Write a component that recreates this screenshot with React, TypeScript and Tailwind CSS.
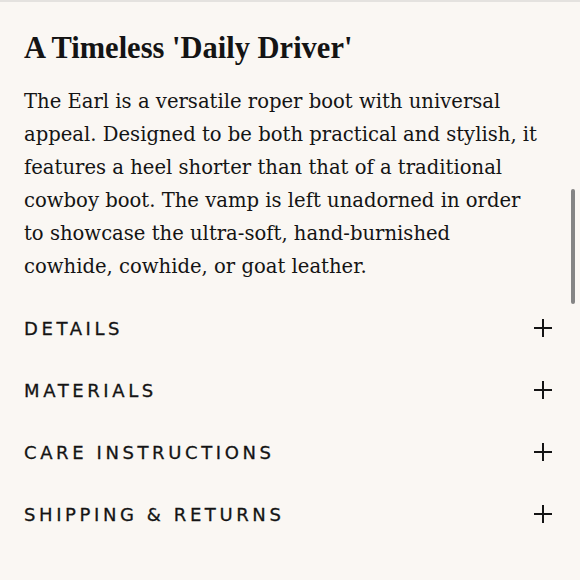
const sections = ["Details", "Materials", "Care Instructions", "Shipping & Returns"];

const lines = [
  "The Earl is a versatile roper boot with universal",
  "appeal. Designed to be both practical and stylish, it",
  "features a heel shorter than that of a traditional",
  "cowboy boot. The vamp is left unadorned in order",
  "to showcase the ultra-soft, hand-burnished",
  "cowhide, cowhide, or goat leather.",
];

export default function App() {
  return (
    <div className="relative w-[580px] h-[580px] overflow-hidden bg-[#faf7f3] border-t-2 border-[#e4e2df] text-[#141414]">
      <div className="pl-6 pr-6 pt-[28px]">
        <h2 className="font-['Liberation_Serif',serif] text-[30.5px] leading-9 font-bold">
          A Timeless 'Daily Driver'
        </h2>
        <p className="mt-[19px] font-['DejaVu_Serif',serif] text-[19.6px] leading-[33px] whitespace-nowrap">
          {lines.map((l) => (
            <span key={l} className="block">
              {l}
            </span>
          ))}
        </p>
        <div className="mt-[14px] flex flex-col">
          {sections.map((s) => (
            <button
              key={s}
              className="h-[62px] flex items-center justify-between text-left font-['DejaVu_Sans',sans-serif] uppercase text-[18px] tracking-[0.2em] [-webkit-text-stroke:0.3px_#141414]"
            >
              <span>{s}</span>
              <svg width="18" height="18" viewBox="0 0 18 18" className="mr-[4px]" stroke="currentColor" strokeWidth="2">
                <path d="M9 0v18M0 9h18" />
              </svg>
            </button>
          ))}
        </div>
      </div>
      <div className="absolute right-[5px] top-[187px] w-[4px] h-[115px] rounded-full bg-[#858585]" />
    </div>
  );
}
